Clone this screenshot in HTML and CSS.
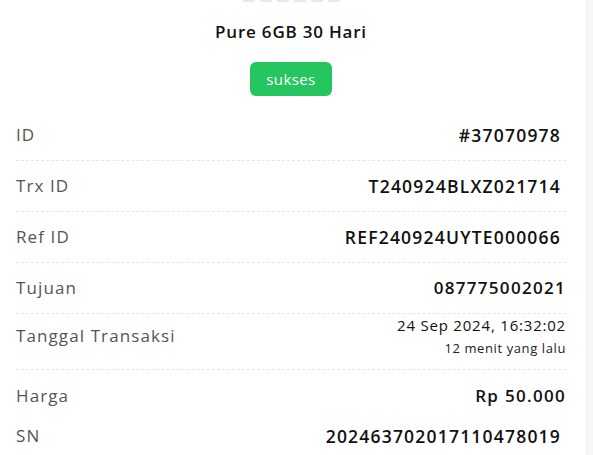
FILE: index.html
```html
<!DOCTYPE html>
<html>
<head>
<meta charset="utf-8">
<link rel="stylesheet" href="styles.css">
</head>
<body>
<div class="page">
  <main class="content">
    <div class="peek"><span></span><span></span><span></span><span></span><span></span><span></span></div>
    <h1 class="title">Pure 6GB 30 Hari</h1>
    <div class="status"><span class="badge">sukses</span></div>
    <div class="rows">
      <div class="row"><span class="label">ID</span><span class="value mono">#37070978</span></div>
      <div class="row"><span class="label">Trx ID</span><span class="value mono">T240924BLXZ021714</span></div>
      <div class="row"><span class="label">Ref ID</span><span class="value mono">REF240924UYTE000066</span></div>
      <div class="row"><span class="label">Tujuan</span><span class="value">087775002021</span></div>
      <div class="row row-tall"><span class="label">Tanggal Transaksi</span><span class="value-stack"><span class="date">24 Sep 2024, 16:32:02</span><span class="ago">12 menit yang lalu</span></span></div>
      <div class="row row-plain"><span class="label">Harga</span><span class="value">Rp 50.000</span></div>
      <div class="row row-plain row-sn"><span class="label">SN</span><span class="value mono">20246370201711047801​9</span></div>
    </div>
  </main>
  <aside class="rail"></aside>
</div>
</body>
</html>
```

FILE: styles.css
```css
* { box-sizing: border-box; }
html, body { margin: 0; padding: 0; background: #fff; }
body { font-family: "Open Sans", "Noto Sans", sans-serif; color: #111; }
.page { display: flex; width: 593px; height: 455px; overflow: hidden; }
.content { width: 586px; padding: 0 20px 0 16px; background: #fff; }
.rail { flex: 1; background: #f5f6f8; border-left: 1px solid #eceef1; }
.peek { display: flex; justify-content: center; gap: 5px; height: 3px; }
.peek span { width: 12px; height: 2px; border-radius: 1px; background: #e9e6ee; }
.title { margin: 19px 0 0; font-size: 17px; font-weight: 600; letter-spacing: 0.8px; text-align: center; line-height: 20px; color: #111; }
.status { display: flex; justify-content: center; margin-top: 20px; }
.badge { background: #25c660; color: #fff; font-size: 15px; letter-spacing: 0.4px; line-height: 34px; height: 34px; width: 82px; text-align: center; border-radius: 6px; }
.rows { margin-top: 14px; }
.row { display: flex; justify-content: space-between; align-items: center; height: 51px; border-bottom: 1px dashed #e6e6e6; }
.row-tall { height: 56px; align-items: flex-start; }
.row-tall .label { margin-top: 10px; }
.row-plain { border-bottom: none; }
.row-sn { height: 30px; }
.label { font-size: 17px; line-height: 24px; letter-spacing: 1.1px; color: #555; }
.value { font-size: 17px; line-height: 24px; font-weight: 600; letter-spacing: 1.3px; color: #111; }
.mono { font-size: 17.5px; letter-spacing: 1.2px; padding-right: 5px; }
.value-stack { display: flex; flex-direction: column; align-items: flex-end; }
.date { font-size: 15px; color: #111; line-height: 20px; letter-spacing: 0.8px; margin-top: 1px; }
.ago { font-size: 13px; color: #222; line-height: 20px; letter-spacing: 0.6px; margin-top: 3px; }
```
